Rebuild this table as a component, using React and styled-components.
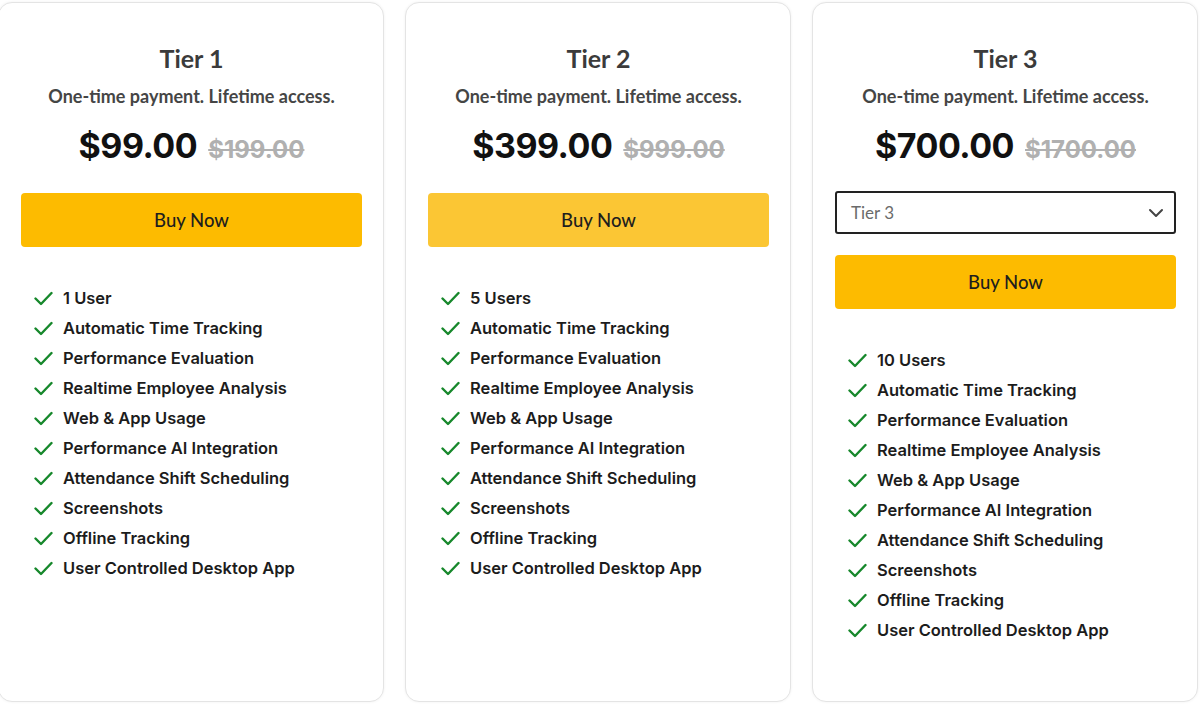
import styled, { createGlobalStyle } from 'styled-components';

const GlobalStyle = createGlobalStyle`
  html, body {
    margin: 0;
    padding: 0;
    background: #fff;
    font-family: Lato, "Liberation Sans", sans-serif;
  }
`;

const Page = styled.div`
  display: flex;
  gap: 21px;
  padding-top: 2px;
  margin-left: -2px;
  width: 1204px;
  height: 704px;
  overflow: hidden;
  box-sizing: border-box;
`;

const Card = styled.div`
  flex: 0 0 386px;
  height: 700px;
  box-sizing: border-box;
  padding: 0 21px 0 22px;
  border: 1px solid #e4e4e4;
  border-radius: 14px;
  box-shadow: 0 0 3px rgba(0, 0, 0, 0.06);
  background: #fff;
  display: flex;
  flex-direction: column;
`;

const Title = styled.h2`
  margin: 38px 0 0;
  text-align: center;
  font-size: 25px;
  font-weight: 700;
  color: #3b3b3b;
  line-height: 34px;
`;

const Sub = styled.p`
  margin: 9px 0 0;
  text-align: center;
  font-size: 18px;
  font-weight: 700;
  color: #454545;
  line-height: 24px;
`;

const PriceRow = styled.div`
  margin-top: 17px;
  display: flex;
  justify-content: center;
  align-items: baseline;
  gap: 11px;
  font-family: Inter, "Liberation Sans", sans-serif;
  height: 44px;
`;

const Price = styled.span`
  font-size: 34px;
  font-weight: 700;
  color: #111;
  letter-spacing: -0.5px;
`;

const OldPrice = styled.span`
  font-size: 24px;
  font-weight: 700;
  color: #b0b0b0;
  text-decoration: line-through;
  text-decoration-thickness: 2px;
`;

const Select = styled.div`
  margin-top: 22px;
  height: 43px;
  box-sizing: border-box;
  border: 2px solid #222;
  border-radius: 3px;
  display: flex;
  align-items: center;
  justify-content: space-between;
  padding: 0 10px 0 14px;
  font-size: 17px;
  color: #6b6b6b;
`;

const BuyButton = styled.button`
  margin-top: ${(p) => (p.$afterSelect ? '21px' : '24px')};
  height: 54px;
  width: 100%;
  border: none;
  border-radius: 4px;
  background: ${(p) => (p.$light ? '#fbc634' : '#fdbb00')};
  font-family: Lato, "Liberation Sans", sans-serif;
  font-size: 18.5px;
  font-weight: 500;
  color: #1e1e1e;
  cursor: pointer;
`;

const Features = styled.ul`
  list-style: none;
  margin: 39px 0 0;
  padding: 0 0 0 13px;
  display: flex;
  flex-direction: column;
  gap: 6px;
`;

const Feature = styled.li`
  display: flex;
  align-items: center;
  gap: 10px;
  height: 24px;
  font-family: Inter, "Liberation Sans", sans-serif;
  font-size: 16.5px;
  font-weight: 600;
  color: #1c1c1c;
`;

const Check = () => (
  <svg width="19" height="15" viewBox="0 0 19 15" fill="none">
    <path d="M1.5 7.5l5.5 5.5L17.5 2" stroke="#17882c" strokeWidth="2.4" strokeLinecap="round" strokeLinejoin="round" />
  </svg>
);

const Chevron = () => (
  <svg width="16" height="10" viewBox="0 0 16 10" fill="none">
    <path d="M2 2l6 6 6-6" stroke="#444" strokeWidth="2" strokeLinecap="round" strokeLinejoin="round" />
  </svg>
);

const baseFeatures = [
  'Automatic Time Tracking',
  'Performance Evaluation',
  'Realtime Employee Analysis',
  'Web & App Usage',
  'Performance AI Integration',
  'Attendance Shift Scheduling',
  'Screenshots',
  'Offline Tracking',
  'User Controlled Desktop App',
];

const tiers = [
  { name: 'Tier 1', price: '$99.00', old: '$199.00', users: '1 User' },
  { name: 'Tier 2', price: '$399.00', old: '$999.00', users: '5 Users', light: true },
  { name: 'Tier 3', price: '$700.00', old: '$1700.00', users: '10 Users', select: true },
];

const App = () => {
  return (
    <>
      <GlobalStyle />
      <Page>
        {tiers.map((t) => (
          <Card key={t.name}>
            <Title>{t.name}</Title>
            <Sub>One-time payment. Lifetime access.</Sub>
            <PriceRow>
              <Price>{t.price}</Price>
              <OldPrice>{t.old}</OldPrice>
            </PriceRow>
            {t.select && (
              <Select>
                Tier 3
                <Chevron />
              </Select>
            )}
            <BuyButton $light={t.light} $afterSelect={t.select}>Buy Now</BuyButton>
            <Features>
              {[t.users, ...baseFeatures].map((f) => (
                <Feature key={f}>
                  <Check />
                  {f}
                </Feature>
              ))}
            </Features>
          </Card>
        ))}
      </Page>
    </>
  );
};

export default App;
